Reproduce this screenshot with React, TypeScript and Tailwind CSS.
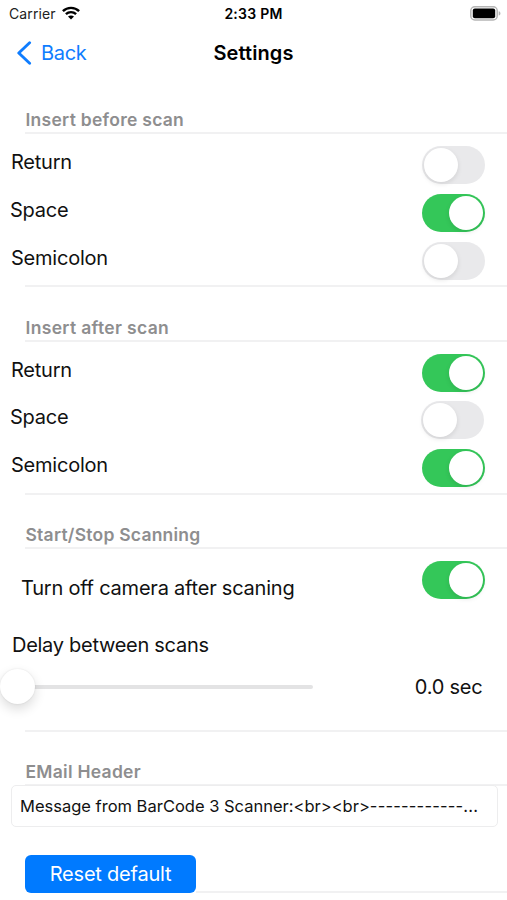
import { useState, type ReactNode } from "react";

function Toggle({ initial, shift = false }: { initial: boolean; shift?: boolean }) {
  const [on, setOn] = useState(initial);
  return (
    <button
      type="button"
      role="switch"
      aria-checked={on}
      onClick={() => setOn(!on)}
      className={`flex h-[38px] w-[63px] shrink-0 items-center rounded-full px-[2px] ${
        on ? "justify-end bg-[#34c759]" : "justify-start bg-[#e9e9eb]"
      } ${shift ? "mr-[23px]" : "mr-[22px]"}`}
    >
      <span className="size-[34px] rounded-full bg-white shadow-[0_2px_5px_rgba(0,0,0,0.1)]" />
    </button>
  );
}

function Divider() {
  return <div className="ml-[25px] h-[2px] shrink-0 bg-[#f1f1f2]" />;
}

function SectionTitle({ children, className }: { children: ReactNode; className: string }) {
  return (
    <h2
      className={`flex shrink-0 items-end pb-[2px] pl-[25.5px] text-[17.5px] leading-5 font-semibold text-[#8e8e8f] ${className}`}
    >
      {children}
    </h2>
  );
}

function Row({ label, on, className, shift }: { label: string; on: boolean; className: string; shift?: boolean }) {
  return (
    <div className="flex h-[47.6px] items-center justify-between">
      <span className={`pb-[6px] ${className}`}>{label}</span>
      <Toggle initial={on} shift={shift} />
    </div>
  );
}

export default function App() {
  return (
    <div className="flex h-[900px] w-[507px] flex-col overflow-hidden bg-white font-['Inter',sans-serif] text-[20px] leading-6 tracking-[-0.22px] text-[#111]">
      <div className="grid h-7 shrink-0 grid-cols-3 items-center text-[14px] leading-4 tracking-normal">
        <div className="flex items-center gap-[6px] pl-[9px] text-[#222]">
          <span className="tracking-[0.1px]">Carrier</span>
          <svg width="18" height="14" viewBox="0 0 18 14" className="-mt-[2px]" fill="none" stroke="#000" strokeWidth="2.4">
            <path d="M0.9 5.2C5.4 0.7 12.6 0.7 17.1 5.2" />
            <path d="M3.9 8.2C6.8 5.4 11.2 5.4 14.1 8.2" />
            <path d="M9 13.6 6 10.5C7.6 9 10.4 9 12 10.5Z" fill="#000" stroke="none" />
          </svg>
        </div>
        <span className="text-center font-semibold tracking-[0.25px] text-black">2:33 PM</span>
        <div className="flex justify-end pr-[6px] pb-[2px]">
          <svg width="31" height="15" viewBox="0 0 31 15">
            <rect x="0.8" y="0.8" width="26.4" height="13.2" rx="4" fill="#fff" stroke="#b5b5b5" strokeWidth="1.5" />
            <rect x="2.8" y="2.6" width="22.4" height="9.6" rx="2" fill="#000" />
            <path d="M28.7 5.2C31 5.8 31 9 28.7 9.6Z" fill="#b5b5b5" />
          </svg>
        </div>
      </div>

      <header className="grid h-[49px] shrink-0 grid-cols-3 items-center">
        <button type="button" className="flex items-center gap-[9.5px] pl-[16.5px] text-[#0f7dff]">
          <svg width="15" height="24" viewBox="0 0 15 24" fill="none" stroke="currentColor" strokeWidth="2.9" strokeLinecap="round" strokeLinejoin="round">
            <path d="M12.6 1.8 1.8 12 12.6 22.2" />
          </svg>
          <span className="tracking-[-0.3px]">Back</span>
        </button>
        <h1 className="text-center font-semibold tracking-[0.1px] text-black">Settings</h1>
      </header>

      <SectionTitle className="h-[55px] tracking-[0.27px]">Insert before scan</SectionTitle>
      <Divider />
      <div className="h-[151.4px] shrink-0 pt-[7.6px]">
        <Row label="Return" on={false} className="pl-[11px]" />
        <Row label="Space" on className="pl-[10px]" />
        <Row label="Semicolon" on={false} className="pl-[11px]" />
      </div>
      <Divider />

      <SectionTitle className="h-[52.6px] tracking-[0.33px]">Insert after scan</SectionTitle>
      <Divider />
      <div className="h-[151px] shrink-0 pt-[7px]">
        <Row label="Return" on className="pl-[11px]" />
        <Row label="Space" on={false} shift className="pl-[10px]" />
        <Row label="Semicolon" on className="pl-[11px]" />
      </div>
      <Divider />

      <SectionTitle className="h-[52px] tracking-[0.23px]">Start/Stop Scanning</SectionTitle>
      <Divider />
      <div className="flex h-[181px] shrink-0 flex-col">
        <div className="flex h-[70px] items-start justify-between pt-[12px]">
          <span className="pt-[15px] pl-[21px]">Turn off camera after scaning</span>
          <Toggle initial />
        </div>
        <span className="pt-[14px] pl-[12px] tracking-[-0.28px]">Delay between scans</span>
        <div className="flex h-[52px] items-center justify-between pt-[8px]">
          <div className="flex w-[313px] items-center">
            <span className="z-10 size-[35px] shrink-0 rounded-full bg-white shadow-[0_5px_12px_rgba(0,0,0,0.14),0_0_2px_rgba(0,0,0,0.1)]" />
            <span className="-ml-2 h-[4px] grow rounded-full bg-[#e3e3e4]" />
          </div>
          <span className="pr-[24.5px]">0.0 sec</span>
        </div>
      </div>
      <Divider />

      <SectionTitle className="h-[52px] tracking-[0.27px]">EMail Header</SectionTitle>
      <Divider />
      <div className="-mt-px mr-[9px] ml-[11px] flex h-[42px] shrink-0 items-center rounded-[5px] border border-[#ededee] bg-white pl-[8px] text-[16.5px] tracking-normal whitespace-nowrap">
        Message from BarCode 3 Scanner:&lt;br&gt;&lt;br&gt;
        <span className="tracking-[0.2px]">------------...</span>
      </div>
      <div className="flex grow items-start pt-[28px]">
        <button
          type="button"
          className="ml-[25px] h-[38px] w-[171px] shrink-0 rounded-[6px] bg-[#007aff] text-white"
        >
          Reset default
        </button>
        <div className="mt-[36px] h-[2px] grow bg-[#f1f1f2]" />
      </div>
    </div>
  );
}
